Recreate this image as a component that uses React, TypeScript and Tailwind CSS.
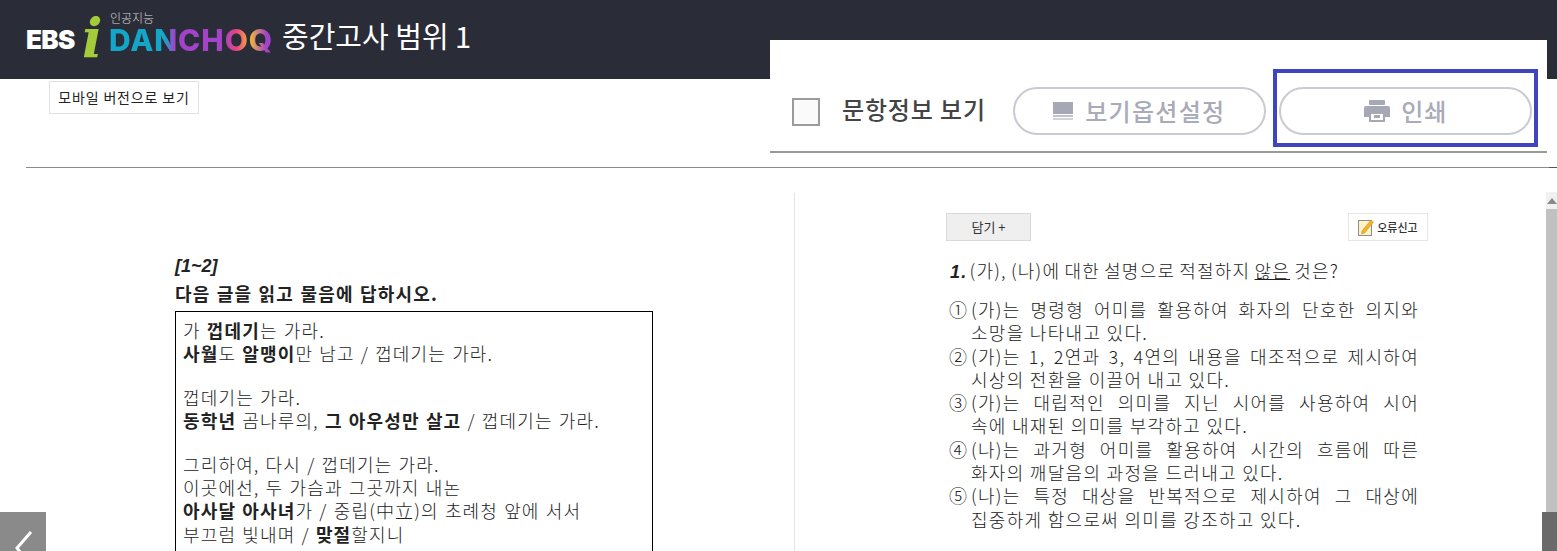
import React from 'react';

const kr = { fontFamily: '"Noto Sans CJK KR", "Liberation Sans", sans-serif' };

const options = [
  ['①', '(가)는 명령형 어미를 활용하여 화자의 단호한 의지와', '소망을 나타내고 있다.'],
  ['②', '(가)는 1, 2연과 3, 4연의 내용을 대조적으로 제시하여', '시상의 전환을 이끌어 내고 있다.'],
  ['③', '(가)는 대립적인 의미를 지닌 시어를 사용하여 시어', '속에 내재된 의미를 부각하고 있다.'],
  ['④', '(나)는 과거형 어미를 활용하여 시간의 흐름에 따른', '화자의 깨달음의 과정을 드러내고 있다.'],
  ['⑤', '(나)는 특정 대상을 반복적으로 제시하여 그 대상에', '집중하게 함으로써 의미를 강조하고 있다.'],
];

const Logo = () => (
  <div className="relative h-[42px] w-[250px] shrink-0">
    <span className="absolute left-0 top-[10px] text-[26px] font-black leading-[32px] tracking-[-0.6px] text-white [font-family:Inter,sans-serif]">EBS</span>
    <span className="absolute left-[56px] top-[-2px] inline-block text-[54px] font-bold italic leading-[52px] text-[#a4cc3a] [font-family:'DejaVu_Serif',serif]">i</span>
    <span className="absolute left-[84px] top-[-4px] text-[12px] font-light leading-[16px] text-[#d5d6da]">인공지능</span>
    <span className="absolute left-[83px] top-[12px] bg-[linear-gradient(90deg,#14a6c9_0%,#14a6c9_34%,#a243c9_40%,#a243c9_70%,#e8477e_78%,#f0b93a_86%,#a243c9_96%)] bg-clip-text text-[30px] font-extrabold leading-[28px] tracking-[0.9px] text-transparent [font-family:Inter,sans-serif]">DANCHOQ</span>
  </div>
);

const PrintIcon = () => (
  <svg width="28" height="22" viewBox="0 0 28 22" fill="#a6a8b5">
    <rect x="6" y="0" width="16" height="5" rx="1" />
    <path d="M3 6h22a2 2 0 0 1 2 2v9h-5v-5H6v5H1V8a2 2 0 0 1 2-2z" />
    <path d="M7 13h14v8H7z" fill="none" stroke="#a6a8b5" strokeWidth="2" />
    <rect x="11" y="15" width="6" height="3" />
  </svg>
);

const BookIcon = () => (
  <svg width="20" height="18" viewBox="0 0 20 18" fill="#a6a8b5">
    <rect x="0" y="0" width="20" height="12" />
    <rect x="0" y="13" width="20" height="2" opacity="0.7" />
    <rect x="0" y="16" width="20" height="2" opacity="0.5" />
  </svg>
);

const NoteIcon = () => (
  <svg width="16" height="18" viewBox="0 0 16 18">
    <rect x="0.5" y="2.5" width="13" height="15" fill="#fdf3c8" stroke="#8d8d8d" />
    <path d="M4 13l9-11 2.5 2-9 11-3 1z" fill="#f0b429" stroke="#c98a10" strokeWidth="0.5" />
  </svg>
);

export default function App() {
  return (
    <div className="relative h-[551px] w-[1557px] overflow-hidden bg-white text-[#222]" style={kr}>
      <header className="flex h-[79px] items-start bg-[#2a2c37] pl-[26px] pt-[14px]">
        <Logo />
        <h1 className="ml-[6px] mt-[2px] text-[29px] font-normal leading-[38px] text-white">중간고사 범위 1</h1>
      </header>

      <div className="pl-[49px] pt-[2px]">
        <button className="h-[33px] w-[150px] border border-[#e2e2e6] bg-white text-[14px] tracking-[0.85px] text-[#222]">모바일 버전으로 보기</button>
      </div>
      <div className="ml-[26px] mt-[53px] h-px bg-[#8a8a8a]" />

      <div className="pl-[175px] pt-[87px]">
        <p className="text-[18px] font-bold italic leading-[22px] text-[#222] [font-family:'Liberation_Sans',sans-serif]">[1~2]</p>
        <p className="mt-[3px] text-[18px] font-bold leading-[26px] tracking-[1.2px] text-[#222] [word-spacing:1px]">다음 글을 읽고 물음에 답하시오.</p>
        <div className="mt-[5px] w-[478px] border border-black pl-[7px] pt-[7px] text-[18px] font-light leading-[23.4px] tracking-[1.15px] text-[#222] [word-spacing:1px]">
          <p>가 <b className="font-bold">껍데기</b>는 가라.</p>
          <p><b className="font-bold">사월</b>도 <b className="font-bold">알맹이</b>만 남고 / 껍데기는 가라.</p>
          <p className="mt-[20px]">껍데기는 가라.</p>
          <p><b className="font-bold">동학년</b> 곰나루의, <b className="font-bold">그 아우성만 살고</b> / 껍데기는 가라.</p>
          <p className="mt-[20px]">그리하여, 다시 / 껍데기는 가라.</p>
          <p>이곳에선, 두 가슴과 그곳까지 내논</p>
          <p><b className="font-bold">아사달 아사녀</b>가 / 중립(中立)의 초례청 앞에 서서</p>
          <p>부끄럼 빛내며 / <b className="font-bold">맞절</b>할지니</p>
          <p>&nbsp;</p>
        </div>
      </div>

      <div className="absolute bottom-0 left-0 flex h-[39px] w-[46px] items-start justify-center bg-[#8a8a8a]">
        <svg width="24" height="39" viewBox="0 0 24 39" fill="none" stroke="#fff" strokeWidth="3">
          <path d="M20 20L6 36l6 8" />
        </svg>
      </div>

      {/* pasted capture on top of the page */}
      <div className="absolute bottom-0 left-[770px] right-0 top-[40px]">
        <div className="mr-[10px] flex h-[113px] items-start border-b-2 border-[#9a9a9a] bg-white pl-[22px] pt-[47px]">
          <span className="mt-[11px] h-[28px] w-[28px] border-2 border-[#9b9b9b] bg-[#fafafa]" />
          <span className="ml-[22px] mt-[7px] text-[24px] font-medium leading-[30px] tracking-[0.85px] text-[#444]">문항정보 보기</span>
          <button className="ml-[27px] flex h-[48px] w-[253px] shrink-0 items-center justify-center gap-[12px] rounded-[24px] border-2 border-[#c9cad2] text-[24px] font-medium tracking-[1.3px] text-[#a9abb8]">
            <BookIcon />보기옵션설정
          </button>
          <button className="ml-[13px] flex h-[48px] w-[253px] shrink-0 items-center justify-center gap-[10px] rounded-[24px] border-2 border-[#c9cad2] text-[24px] font-medium tracking-[1px] text-[#a9abb8]">
            <PrintIcon />인쇄
          </button>
        </div>
        <div className="h-[40px]" />
        <div className="ml-[24px] h-[400px] border-l border-[#e3e3e3] pl-[151px] pt-[20px]">
          <div className="flex w-[482px] items-start justify-between">
            <button className="h-[28px] w-[85px] border border-[#d9d9d9] bg-[#efefef] text-[13px] text-[#333]">담기 +</button>
            <button className="flex h-[28px] w-[80px] items-center justify-center gap-[3px] border border-[#e6e6e6] bg-white text-[11px] font-medium text-[#333]">
              <NoteIcon />오류신고
            </button>
          </div>
          <p className="ml-[4px] mt-[16px] text-[18px] font-light leading-[26px] tracking-[1.2px] text-[#222] [word-spacing:-1px]">
            <b className="mr-[-2px] font-bold italic [font-family:'Liberation_Sans',sans-serif]">1.</b> (가), (나)에 대한 설명으로 적절하지 <u>않은</u> 것은?
          </p>
          <div className="mt-[13px] w-[473px] text-[18px] font-light leading-[23.3px] tracking-[1.3px] text-[#222]">
            {options.map(([num, first, second]) => (
              <div key={num} className="flex">
                <span className="ml-[3px] w-[22px] shrink-0 tracking-normal">{num}</span>
                <div className="min-w-0 flex-1">
                  <div className="whitespace-nowrap text-justify [text-align-last:justify]">{first}</div>
                  <div>{second}</div>
                </div>
              </div>
            ))}
          </div>
        </div>
      </div>

      <div className="absolute right-0 top-[167px] h-px w-[8px] bg-[#555]" />

      {/* scrollbar of the capture */}
      <div className="absolute bottom-0 right-0 top-[192px] flex w-[11px] flex-col items-center bg-[#f1f1f1]">
        <div className="mt-[6px] h-0 w-0 border-x-[5px] border-b-[6px] border-x-transparent border-b-[#8a8a8a]" />
        <div className="mt-[5px] w-full flex-1 bg-[#c1c1c1]" />
      </div>
      <div className="absolute bottom-0 right-0 h-[39px] w-[15px] bg-[#6a6a6a]" />

      {/* highlight round the print button */}
      <div className="absolute left-[1273px] top-[69px] h-[78px] w-[265px] border-4 border-[#3f45bf]" />
    </div>
  );
}
